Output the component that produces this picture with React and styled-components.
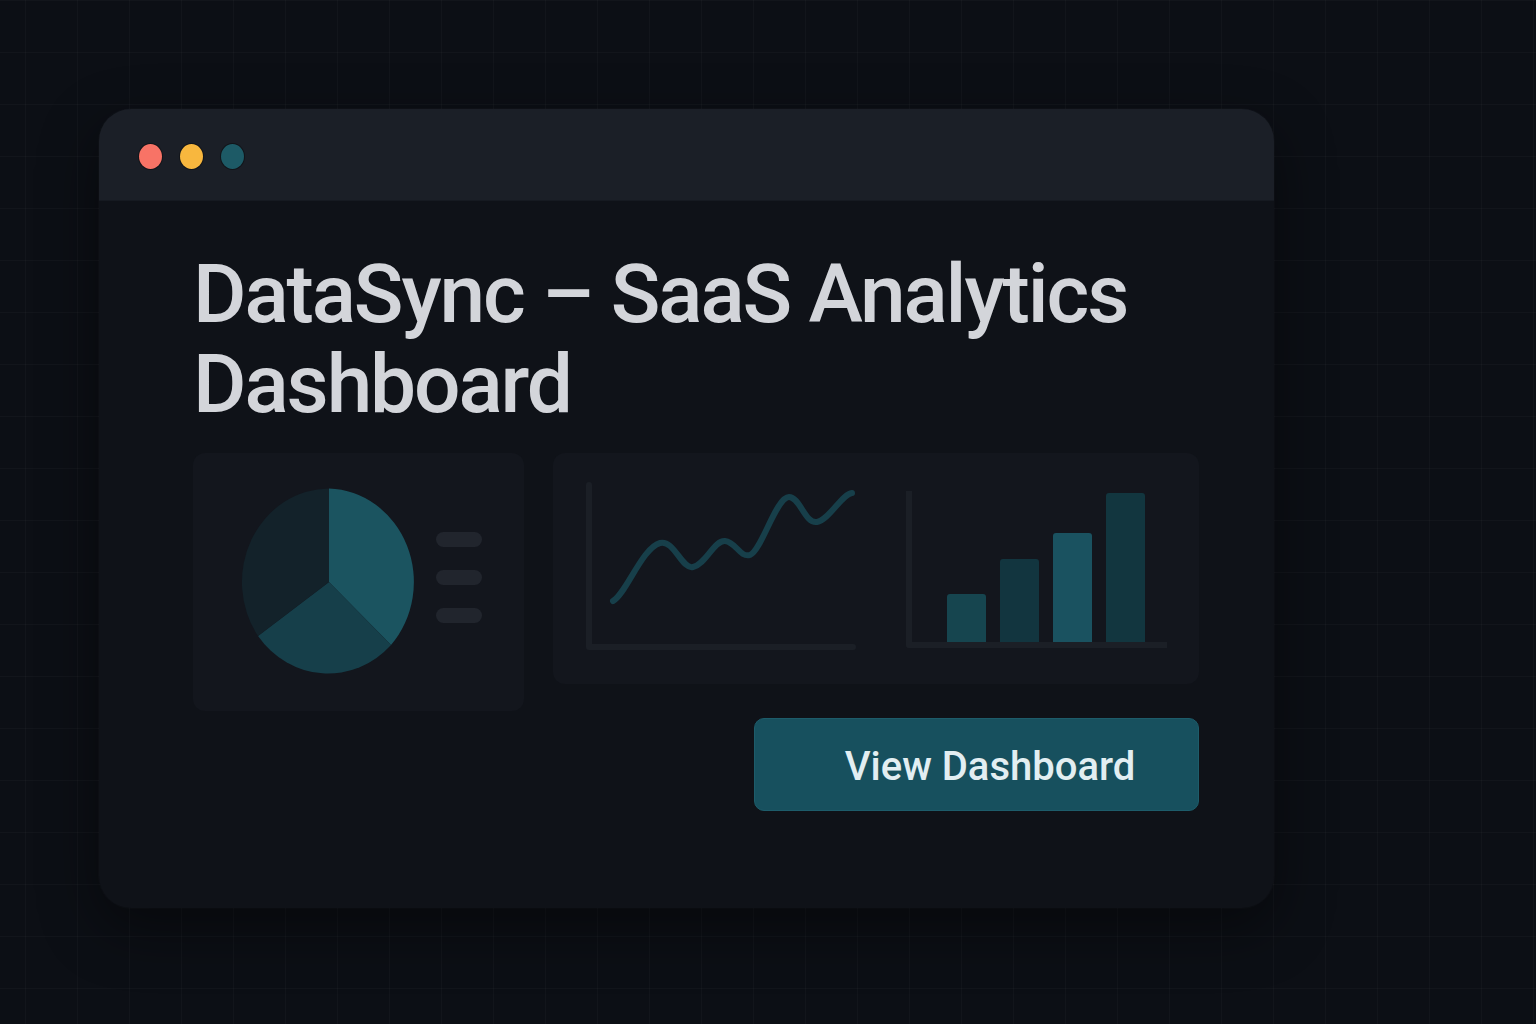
import styled, { createGlobalStyle } from "styled-components";

const GlobalStyle = createGlobalStyle`
  html, body {
    margin: 0;
    padding: 0;
    background: #0c0f15;
  }
  body {
    font-family: Roboto, "Noto Sans", "Liberation Sans", sans-serif;
  }
`;

export default function App() {
  const dots = ["#f87366", "#f8b73e", "#1d5a66"];
  const legend = [0, 1, 2];
  const bars = [
    { height: 48, color: "#16454f" },
    { height: 83, color: "#12353f" },
    { height: 109, color: "#1a5260" },
    { height: 149, color: "#12363f" },
  ];

  return (
    <Page>
      <GlobalStyle />
      <Window>
        <TitleBar>
          {dots.map((c) => (
            <Dot key={c} color={c} />
          ))}
        </TitleBar>
        <Body>
          <Title>
            DataSync – SaaS Analytics
            <br />
            Dashboard
          </Title>
          <Row>
            <PieCard>
              <svg width="180" height="190" viewBox="0 0 180 190">
                <g transform="translate(90 95)">
                  <path
                    d="M0 0 L0 -93.5 A87.5 93.5 0 0 1 62 63 Z"
                    fill="#1b5460"
                  />
                  <path
                    d="M0 0 L62 63 A87.5 93.5 0 0 1 -71 54 Z"
                    fill="#163f4a"
                  />
                  <path
                    d="M0 0 L-71 54 A87.5 93.5 0 0 1 0 -93.5 Z"
                    fill="#13222a"
                  />
                </g>
              </svg>
              <Legend>
                {legend.map((i) => (
                  <LegendBar key={i} />
                ))}
              </Legend>
            </PieCard>
            <RightColumn>
              <ChartCard>
                <LineChart width="280" height="175" viewBox="0 0 280 175">
                  <path
                    d="M3 3 V165 H267"
                    fill="none"
                    stroke="#1b1f26"
                    strokeWidth="6"
                    strokeLinecap="round"
                    strokeLinejoin="round"
                  />
                  <path
                    d="M27 119 C40 112 56 66 74 61 C88 57 96 88 107 85 C120 82 128 58 139 59 C150 60 154 76 164 73 C176 68 190 15 203 15 C214 15 219 42 231 40 C243 38 256 12 266 11"
                    fill="none"
                    stroke="#173f4a"
                    strokeWidth="6"
                    strokeLinecap="round"
                  />
                </LineChart>
                <BarChart>
                  <BarsArea>
                    {bars.map((b, i) => (
                      <Bar
                        key={i}
                        color={b.color}
                        style={{ height: b.height }}
                      />
                    ))}
                  </BarsArea>
                </BarChart>
              </ChartCard>
              <Button>View Dashboard</Button>
            </RightColumn>
          </Row>
        </Body>
      </Window>
    </Page>
  );
}

const Page = styled.div`
  min-height: 1024px;
  box-sizing: border-box;
  padding: 109px 0 0 99px;
  background-color: #0c0f15;
  background-image: linear-gradient(
      rgba(255, 255, 255, 0.022) 1px,
      transparent 1px
    ),
    linear-gradient(90deg, rgba(255, 255, 255, 0.022) 1px, transparent 1px);
  background-size: 52px 52px;
  background-position: 25px 0px;
`;

const Window = styled.div`
  width: 1175px;
  height: 799px;
  border-radius: 32px;
  background: #0f1218;
  overflow: hidden;
  box-shadow: 0 20px 60px rgba(0, 0, 0, 0.45),
    0 0 0 1px rgba(255, 255, 255, 0.02);
`;

const TitleBar = styled.div`
  height: 92px;
  background: #1b1f27;
  display: flex;
  align-items: center;
  gap: 18px;
  padding: 4px 0 0 40px;
  border-bottom: 1px solid #161a21;
  box-sizing: border-box;
`;

const Dot = styled.div`
  width: 23px;
  height: 25px;
  border-radius: 50%;
  background: ${(p) => p.color};
  box-shadow: 0 0 0 1px rgba(0, 0, 0, 0.35);
`;

const Body = styled.div`
  padding: 48px 0 0 94px;
`;

const Title = styled.h1`
  margin: 0;
  font-size: 82px;
  line-height: 90px;
  font-weight: 500;
  color: #d3d5da;
  letter-spacing: -2.1px;
`;

const Row = styled.div`
  display: flex;
  align-items: flex-start;
  gap: 29px;
  margin-top: 24px;
`;

const Card = styled.div`
  background: #13161d;
  border-radius: 12px;
  box-sizing: border-box;
`;

const PieCard = styled(Card)`
  width: 331px;
  height: 258px;
  display: flex;
  align-items: center;
  padding: 0 0 0 46px;
  gap: 17px;
`;

const Legend = styled.div`
  display: flex;
  flex-direction: column;
  gap: 23px;
  margin-top: -10px;
`;

const LegendBar = styled.div`
  width: 46px;
  height: 15px;
  border-radius: 8px;
  background: #21252d;
`;

const RightColumn = styled.div`
  display: flex;
  flex-direction: column;
  align-items: flex-end;
  gap: 34px;
`;

const ChartCard = styled(Card)`
  width: 646px;
  height: 231px;
  display: flex;
  align-items: flex-start;
  padding: 29px 0 0 33px;
`;

const LineChart = styled.svg`
  display: block;
`;

const BarChart = styled.div`
  margin-left: 40px;
  margin-top: 9px;
  width: 261px;
  height: 157px;
  border-left: 6px solid #1b1f26;
  border-bottom: 6px solid #1b1f26;
  border-radius: 0 0 0 3px;
  box-sizing: border-box;
`;

const BarsArea = styled.div`
  height: 100%;
  display: flex;
  align-items: flex-end;
  gap: 14px;
  padding-left: 35px;
`;

const Bar = styled.div`
  width: 39px;
  background: ${(p) => p.color};
  border-radius: 3px 3px 0 0;
`;

const Button = styled.button`
  width: 445px;
  height: 93px;
  border: 1px solid #1d5c6a;
  border-radius: 10px;
  background: #17505e;
  color: #e2eef2;
  font-family: Roboto, "Noto Sans", "Liberation Sans", sans-serif;
  font-size: 40px;
  font-weight: 500;
  padding: 4px 0 0 27px;
  cursor: pointer;
`;
